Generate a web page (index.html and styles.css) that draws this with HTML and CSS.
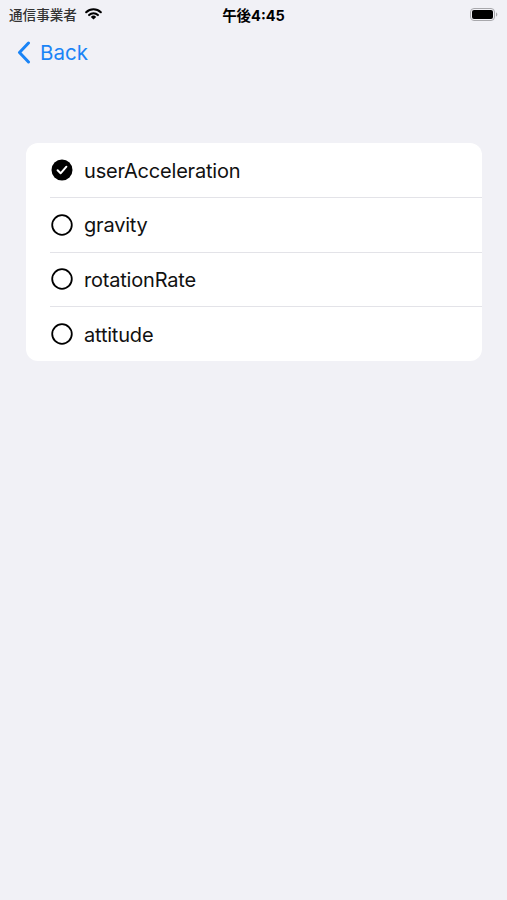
FILE: index.html
```html
<!DOCTYPE html>
<html>
<head>
<meta charset="utf-8">
<link rel="stylesheet" href="styles.css">
</head>
<body>
<div class="status">
  <div class="status-left">
    <span class="carrier">通信事業者</span>
    <svg class="wifi" width="17" height="12" viewBox="0 0 17 12">
      <path d="M1.2 4.2A10.4 10.4 0 0 1 15.8 4.2" fill="none" stroke="#000" stroke-width="2.1" stroke-linecap="round"/>
      <path d="M4.1 7.1A6.2 6.2 0 0 1 12.9 7.1" fill="none" stroke="#000" stroke-width="2.1" stroke-linecap="round"/>
      <path d="M8.5 11.6L5.8 8.9A3.8 3.8 0 0 1 11.2 8.9z" fill="#000"/>
    </svg>
  </div>
  <div class="time">午後4:45</div>
  <div class="status-right">
    <svg width="28" height="13" viewBox="0 0 28 13">
      <rect x="0.5" y="0.5" width="24" height="12" rx="3.5" fill="none" stroke="#a8a8ac" stroke-width="1"/>
      <rect x="2" y="2" width="21" height="9" rx="2" fill="#000"/>
      <path d="M26 4.5v4c.8-.3 1.3-1.1 1.3-2s-.5-1.7-1.3-2z" fill="#a8a8ac"/>
    </svg>
  </div>
</div>
<div class="nav">
  <div class="back">
    <svg width="14" height="23" viewBox="0 0 14 23">
      <path d="M11.5 2L2.5 11.5l9 9.5" fill="none" stroke="#1a84f6" stroke-width="3" stroke-linecap="round" stroke-linejoin="round"/>
    </svg>
    <span>Back</span>
  </div>
</div>
<div class="card">
  <div class="row">
    <svg class="radio" width="22" height="22" viewBox="0 0 22 22">
      <circle cx="11" cy="11" r="10.5" fill="#000"/>
      <path d="M6.6 11.3l3 3 5.8-6.6" fill="none" stroke="#fff" stroke-width="2" stroke-linecap="round" stroke-linejoin="round"/>
    </svg>
    <div class="label">userAcceleration</div>
  </div>
  <div class="row">
    <svg class="radio" width="22" height="22" viewBox="0 0 22 22"><circle cx="11" cy="11" r="9.8" fill="none" stroke="#000" stroke-width="1.8"/></svg>
    <div class="label">gravity</div>
  </div>
  <div class="row">
    <svg class="radio" width="22" height="22" viewBox="0 0 22 22"><circle cx="11" cy="11" r="9.8" fill="none" stroke="#000" stroke-width="1.8"/></svg>
    <div class="label">rotationRate</div>
  </div>
  <div class="row">
    <svg class="radio" width="22" height="22" viewBox="0 0 22 22"><circle cx="11" cy="11" r="9.8" fill="none" stroke="#000" stroke-width="1.8"/></svg>
    <div class="label">attitude</div>
  </div>
</div>
</body>
</html>
```

FILE: styles.css
```css
html, body {
  margin: 0;
  padding: 0;
  background: #f1f1f6;
  font-family: Inter, Roboto, "Noto Sans CJK JP", sans-serif;
  width: 507px;
  height: 900px;
  overflow: hidden;
}
.status {
  height: 28px;
  display: flex;
  align-items: center;
  justify-content: space-between;
  padding: 0 9px 0 9px;
}
.status-left {
  display: flex;
  align-items: center;
  gap: 8px;
  width: 140px;
}
.carrier {
  font-family: "Noto Sans CJK JP", sans-serif;
  font-size: 13.6px;
  color: #333;
  font-weight: 500;
}
.wifi {
  margin-top: -1px;
}
.time {
  font-family: Inter, "Noto Sans CJK JP", sans-serif;
  font-size: 14.5px;
  font-weight: 700;
  color: #000;
}
.status-right {
  width: 140px;
  display: flex;
  justify-content: flex-end;
}
.nav {
  height: 48px;
  display: flex;
  align-items: center;
  padding-left: 17px;
}
.back {
  display: flex;
  align-items: center;
  gap: 10px;
  color: #1a84f6;
  font-size: 20.5px;
}
.back span {
  margin-left: -1px;
}
.card {
  margin: 67px 25px 0 26px;
  background: #fff;
  border-radius: 12px;
  overflow: hidden;
}
.row {
  height: 54.6px;
  display: flex;
  align-items: center;
  padding-left: 25px;
  gap: 11px;
  position: relative;
}
.row + .row::before {
  content: "";
  position: absolute;
  left: 24px;
  right: 0;
  top: -0.6px;
  border-top: 1px solid #e3e3e8;
}
.label {
  font-size: 20px;
  color: #111;
  letter-spacing: -0.2px;
  margin-top: 1px;
}
```
